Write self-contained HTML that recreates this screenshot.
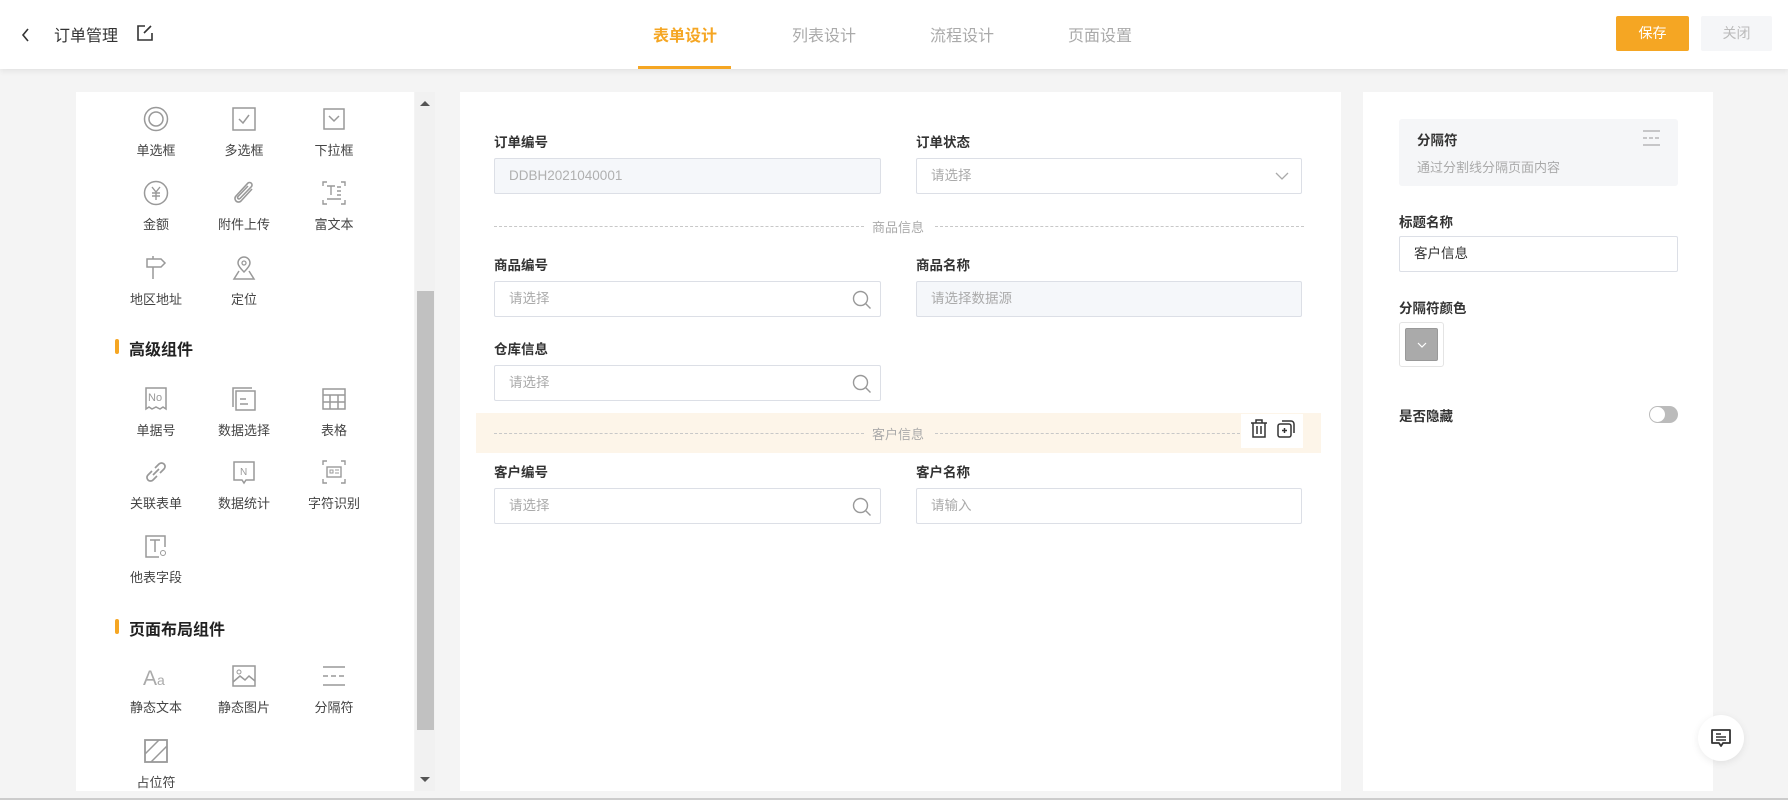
<!DOCTYPE html>
<html><head><meta charset="utf-8">
<style>
*{box-sizing:border-box;margin:0;padding:0}
body{width:1788px;height:800px;background:#f4f4f4;font-family:"Liberation Sans","Noto Sans CJK SC",sans-serif;position:relative;overflow:hidden;color:#333}
.a{position:absolute}
.hdr{left:0;top:0;width:1788px;height:69px;background:#fff;box-shadow:0 2px 6px rgba(0,0,0,.08)}
.tab{top:22px;font-size:16px;color:#aaa}
.btn{top:16px;height:35px;font-size:14px;text-align:center;line-height:35px;border-radius:2px}
.panel{background:#fff}
.it{width:90px;text-align:center;font-size:13px;color:#444}
.it svg{display:block;margin:0 auto 8px;}
.sec{font-size:16px;font-weight:bold;color:#222}
.sec:before{content:"";position:absolute;left:-14px;top:3px;width:4px;height:15px;background:#f5a623;border-radius:2px}
.lb{font-size:13.5px;font-weight:bold;color:#333}
.in{height:36px;border:1px solid #dcdfe6;border-radius:2px;font-size:13.5px;color:#aaa;line-height:34px;padding-left:14px;background:#fff}
.dis{background:#f5f7fa}
.dv{height:1px;border-top:1px dashed #c8c8c8}
.dt{font-size:13px;color:#aaa}
</style></head><body>
<div class="a hdr"></div>
<svg class="a" style="left:20px;top:28px" width="12" height="14" viewBox="0 0 12 14"><path d="M8 1L3 7l5 6" fill="none" stroke="#333" stroke-width="1.6"/></svg>
<div class="a" style="left:54px;top:22px;font-size:16px;color:#333">订单管理</div>
<svg class="a" style="left:136px;top:24px" width="18" height="18" viewBox="0 0 18 18"><path d="M9 2H2v14h14V9" fill="none" stroke="#333" stroke-width="1.6"/><path d="M15 2l-7 7" stroke="#333" stroke-width="1.6"/></svg>
<div class="a tab" style="left:653px;color:#f5a623;font-weight:bold">表单设计</div>
<div class="a tab" style="left:792px">列表设计</div>
<div class="a tab" style="left:930px">流程设计</div>
<div class="a tab" style="left:1068px">页面设置</div>
<div class="a" style="left:638px;top:66px;width:93px;height:3px;background:#f5a623"></div>
<div class="a btn" style="left:1616px;width:73px;background:#f5a623;color:#fff">保存</div>
<div class="a btn" style="left:1701px;width:71px;background:#f5f6f8;color:#bbb">关闭</div>

<div class="a panel" style="left:76px;top:92px;width:338px;height:699px"></div>
<div class="a" style="left:415px;top:92px;width:20px;height:699px;background:#f1f1f1"></div>
<div class="a" style="left:417px;top:291px;width:17px;height:439px;background:#c1c1c1"></div>
<svg class="a" style="left:420px;top:100px" width="10" height="7"><path d="M0 6L5 1l5 5z" fill="#555"/></svg>
<svg class="a" style="left:420px;top:776px" width="10" height="7"><path d="M0 1l5 5 5-5z" fill="#555"/></svg>

<div class="a it" style="left:111px;top:106px"><svg width="26" height="26" viewBox="0 0 26 26"><circle cx="13" cy="13" r="11.5" fill="none" stroke="#999" stroke-width="1.5"/><circle cx="13" cy="13" r="7" fill="none" stroke="#999" stroke-width="1.5"/></svg>单选框</div>
<div class="a it" style="left:199px;top:106px"><svg width="26" height="26" viewBox="0 0 26 26"><rect x="2" y="2" width="22" height="22" fill="none" stroke="#999" stroke-width="1.5"/><path d="M8 13l4 4 6-8" fill="none" stroke="#999" stroke-width="1.5"/></svg>多选框</div>
<div class="a it" style="left:289px;top:106px"><svg width="26" height="26" viewBox="0 0 26 26"><rect x="3" y="3" width="20" height="20" fill="none" stroke="#999" stroke-width="1.5"/><path d="M8 10l5 5 5-5" fill="none" stroke="#999" stroke-width="1.5"/></svg>下拉框</div>
<div class="a it" style="left:111px;top:180px"><svg width="26" height="26" viewBox="0 0 26 26"><circle cx="13" cy="13" r="11.5" fill="none" stroke="#999" stroke-width="1.5"/><path d="M9 7l4 5 4-5M13 12v8M9 13h8M9 16h8" fill="none" stroke="#999" stroke-width="1.4"/></svg>金额</div>
<div class="a it" style="left:199px;top:180px"><svg width="26" height="26" viewBox="0 0 26 26"><path d="M21 9L10 21a3.5 3.5 0 01-5-5L17 3a2.5 2.5 0 013.5 3.5L9 18.5a1.3 1.3 0 01-2-2L17 6" fill="none" stroke="#999" stroke-width="1.6"/></svg>附件上传</div>
<div class="a it" style="left:289px;top:180px"><svg width="26" height="26" viewBox="0 0 26 26"><path d="M2 6V2h4M20 2h4v4M2 20v4h4M24 20v4h-4M6 6h8M10 6v9M16 7h4M16 11h4M16 15h4M6 19h14" fill="none" stroke="#999" stroke-width="1.4"/></svg>富文本</div>
<div class="a it" style="left:111px;top:255px"><svg width="26" height="26" viewBox="0 0 26 26"><path d="M4 4h14l4 4-4 4H4zM10 12v12M10 1v3" fill="none" stroke="#999" stroke-width="1.5"/></svg>地区地址</div>
<div class="a it" style="left:199px;top:255px"><svg width="26" height="26" viewBox="0 0 26 26"><path d="M13 17c-4-4-6-7-6-9a6 6 0 0112 0c0 2-2 5-6 9z" fill="none" stroke="#999" stroke-width="1.5"/><circle cx="13" cy="8" r="2" fill="none" stroke="#999" stroke-width="1.3"/><path d="M8 16l-5 8h20l-5-8" fill="none" stroke="#999" stroke-width="1.5"/></svg>定位</div>

<div class="a sec" style="left:129px;top:336px">高级组件</div>
<div class="a it" style="left:111px;top:386px"><svg width="26" height="26" viewBox="0 0 26 26"><path d="M3 2h20v21l-3-2-3 2-4-2-4 2-3-2-3 2z" fill="none" stroke="#999" stroke-width="1.5"/><text x="5" y="15" font-size="11" fill="#999" font-family="Liberation Sans">No</text></svg>单据号</div>
<div class="a it" style="left:199px;top:386px"><svg width="26" height="26" viewBox="0 0 26 26"><rect x="5" y="5" width="19" height="19" fill="none" stroke="#999" stroke-width="1.5"/><path d="M2 21V2h19M9 13h6M9 18h8" fill="none" stroke="#999" stroke-width="1.5"/></svg>数据选择</div>
<div class="a it" style="left:289px;top:386px"><svg width="26" height="26" viewBox="0 0 26 26"><rect x="2" y="3" width="22" height="20" fill="none" stroke="#999" stroke-width="1.5"/><path d="M2 9h22M2 16h22M9 9v14M17 9v14" stroke="#999" stroke-width="1.5"/></svg>表格</div>
<div class="a it" style="left:111px;top:459px"><svg width="26" height="26" viewBox="0 0 26 26"><path d="M10 16l6-6M9 12l-4 4a3.5 3.5 0 005 5l4-4M17 14l4-4a3.5 3.5 0 00-5-5l-4 4" fill="none" stroke="#999" stroke-width="1.7"/></svg>关联表单</div>
<div class="a it" style="left:199px;top:459px"><svg width="26" height="26" viewBox="0 0 26 26"><path d="M3 3h20v18h-8l-2 3-2-3H3z" fill="none" stroke="#999" stroke-width="1.5"/><text x="9" y="16" font-size="10" fill="#999" font-family="Liberation Sans">N</text></svg>数据统计</div>
<div class="a it" style="left:289px;top:459px"><svg width="26" height="26" viewBox="0 0 26 26"><path d="M2 6V2h4M20 2h4v4M2 20v4h4M24 20v4h-4" fill="none" stroke="#999" stroke-width="1.4"/><rect x="6" y="8" width="14" height="10" fill="none" stroke="#999" stroke-width="1.4"/><path d="M14 11h4M14 14h4M9 11h3v3H9z" stroke="#999" fill="none"/></svg>字符识别</div>
<div class="a it" style="left:111px;top:533px"><svg width="26" height="26" viewBox="0 0 26 26"><path d="M22 14V3H3v21h13" fill="none" stroke="#999" stroke-width="1.5"/><path d="M7 7h10M12 7v12" stroke="#999" stroke-width="1.5"/><circle cx="20" cy="20" r="2.5" fill="none" stroke="#999"/></svg>他表字段</div>

<div class="a sec" style="left:129px;top:616px">页面布局组件</div>
<div class="a it" style="left:111px;top:663px"><svg width="26" height="26" viewBox="0 0 26 26"><text x="0" y="22" font-size="21" fill="#aaa" font-family="Liberation Sans">A</text><text x="14" y="22" font-size="14" fill="#aaa" font-family="Liberation Sans">a</text></svg>静态文本</div>
<div class="a it" style="left:199px;top:663px"><svg width="26" height="26" viewBox="0 0 26 26"><rect x="2" y="3" width="22" height="20" fill="none" stroke="#999" stroke-width="1.5"/><circle cx="8" cy="9" r="2" fill="none" stroke="#999"/><path d="M2 19l7-6 5 4 4-4 6 5" fill="none" stroke="#999" stroke-width="1.5"/></svg>静态图片</div>
<div class="a it" style="left:289px;top:663px"><svg width="26" height="26" viewBox="0 0 26 26"><path d="M2 4h22M2 22h22" stroke="#999" stroke-width="1.5"/><path d="M2 13h22" stroke="#999" stroke-width="1.5" stroke-dasharray="5 3"/></svg>分隔符</div>
<div class="a it" style="left:111px;top:738px"><svg width="26" height="26" viewBox="0 0 26 26"><rect x="2" y="2" width="22" height="22" fill="none" stroke="#999" stroke-width="1.8"/><path d="M2 16L16 2M8 24L24 8" stroke="#999" stroke-width="1.5"/></svg>占位符</div>

<div class="a panel" style="left:460px;top:92px;width:881px;height:699px"></div>
<div class="a lb" style="left:494px;top:131px">订单编号</div>
<div class="a in dis" style="left:494px;top:158px;width:387px;color:#b0b0b0">DDBH2021040001</div>
<div class="a lb" style="left:916px;top:131px">订单状态</div>
<div class="a in" style="left:916px;top:158px;width:386px">请选择</div>
<svg class="a" style="left:1275px;top:172px" width="14" height="9"><path d="M1 1l6 6 6-6" fill="none" stroke="#aaa" stroke-width="1.3"/></svg>
<div class="a dv" style="left:494px;top:226px;width:370px"></div>
<div class="a dt" style="left:872px;top:217px">商品信息</div>
<div class="a dv" style="left:935px;top:226px;width:369px"></div>

<div class="a lb" style="left:494px;top:254px">商品编号</div>
<div class="a in" style="left:494px;top:281px;width:387px">请选择</div>
<div class="a lb" style="left:916px;top:254px">商品名称</div>
<div class="a in dis" style="left:916px;top:281px;width:386px">请选择数据源</div>
<div class="a lb" style="left:494px;top:338px">仓库信息</div>
<div class="a in" style="left:494px;top:365px;width:387px">请选择</div>

<div class="a" style="left:476px;top:413px;width:845px;height:40px;background:#fdf5e9"></div>
<div class="a dv" style="left:494px;top:433px;width:370px"></div>
<div class="a dt" style="left:872px;top:424px">客户信息</div>
<div class="a dv" style="left:935px;top:433px;width:305px"></div>
<div class="a" style="left:1241px;top:414px;width:62px;height:34px;background:#fff"></div>
<svg class="a" style="left:1250px;top:419px" width="18" height="20" viewBox="0 0 18 20"><path d="M1 4h16M6 4V1h6v3M3 4v14h12V4M7 7v8M11 7v8" fill="none" stroke="#333" stroke-width="1.5"/></svg>
<svg class="a" style="left:1277px;top:419px" width="19" height="20" viewBox="0 0 19 20"><rect x="1" y="5" width="13" height="13" rx="2" fill="none" stroke="#333" stroke-width="1.5"/><path d="M5 2h9a3 3 0 013 3v9" fill="none" stroke="#333" stroke-width="1.5"/><path d="M7.5 9v5M5 11.5h5" stroke="#333" stroke-width="1.5"/></svg>

<div class="a lb" style="left:494px;top:461px">客户编号</div>
<div class="a in" style="left:494px;top:488px;width:387px">请选择</div>
<div class="a lb" style="left:916px;top:461px">客户名称</div>
<div class="a in" style="left:916px;top:488px;width:386px">请输入</div>
<svg class="a" style="left:852px;top:290px" width="20" height="20" viewBox="0 0 20 20"><circle cx="8.5" cy="8.5" r="7" fill="none" stroke="#999" stroke-width="1.4"/><path d="M13.5 13.5l5 5" stroke="#999" stroke-width="1.4"/></svg>
<svg class="a" style="left:852px;top:374px" width="20" height="20" viewBox="0 0 20 20"><circle cx="8.5" cy="8.5" r="7" fill="none" stroke="#999" stroke-width="1.4"/><path d="M13.5 13.5l5 5" stroke="#999" stroke-width="1.4"/></svg>
<svg class="a" style="left:852px;top:497px" width="20" height="20" viewBox="0 0 20 20"><circle cx="8.5" cy="8.5" r="7" fill="none" stroke="#999" stroke-width="1.4"/><path d="M13.5 13.5l5 5" stroke="#999" stroke-width="1.4"/></svg>

<div class="a panel" style="left:1363px;top:92px;width:350px;height:699px"></div>
<div class="a" style="left:1399px;top:119px;width:279px;height:67px;background:#f5f6f8;border-radius:3px"></div>
<div class="a lb" style="left:1417px;top:129px">分隔符</div>
<div class="a" style="left:1417px;top:157px;font-size:13px;color:#aaa">通过分割线分隔页面内容</div>
<svg class="a" style="left:1642px;top:130px" width="19" height="17"><path d="M1 1h17M1 15h17" stroke="#aaa" stroke-width="1.2"/><path d="M1 8h17" stroke="#aaa" stroke-width="1.2" stroke-dasharray="4 2"/></svg>
<div class="a lb" style="left:1399px;top:211px">标题名称</div>
<div class="a in" style="left:1399px;top:236px;width:279px;color:#333">客户信息</div>
<div class="a lb" style="left:1399px;top:297px">分隔符颜色</div>
<div class="a" style="left:1399px;top:322px;width:45px;height:45px;border:1px solid #e4e4e4;border-radius:3px;background:#fff"></div>
<div class="a" style="left:1405px;top:328px;width:33px;height:33px;background:#aaa;border:1px solid #999;border-radius:2px"></div>
<svg class="a" style="left:1417px;top:342px" width="10" height="6"><path d="M1 1l4 4 4-4" fill="none" stroke="#fff" stroke-width="1.2"/></svg>
<div class="a lb" style="left:1399px;top:405px">是否隐藏</div>
<div class="a" style="left:1649px;top:406px;width:29px;height:17px;background:#bbb;border-radius:9px"></div>
<div class="a" style="left:1650px;top:407px;width:15px;height:15px;background:#fff;border-radius:50%"></div>

<div class="a" style="left:1698px;top:715px;width:46px;height:46px;border-radius:50%;background:#fff;box-shadow:0 2px 8px rgba(0,0,0,.08)"></div>
<svg class="a" style="left:1710px;top:728px" width="22" height="20" viewBox="0 0 22 20"><path d="M2 2h18v13h-7l-2 3-2-3H2z" fill="none" stroke="#333" stroke-width="1.8" stroke-linejoin="round"/><path d="M6 6h5M6 9h10M6 12h10" stroke="#333" stroke-width="1.4"/></svg>
<div class="a" style="left:0;top:798px;width:1788px;height:2px;background:#ccc"></div>
</body></html>
